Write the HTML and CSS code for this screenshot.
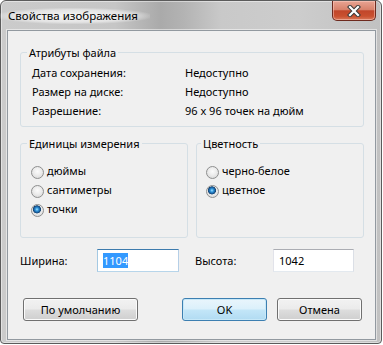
FILE: index.html
```html
<!DOCTYPE html>
<html lang="ru">
<head>
    <meta charset="UTF-8">
    <meta name="viewport" content="width=device-width, initial-scale=1.0">
    <title>Свойства изображения</title>
    <link rel="stylesheet" href="styles.css">
</head>
<body>
    <div class="window">
        <div class="title-bar">
            <span class="title">Свойства изображения</span>
            <button class="close-button" aria-label="Закрыть">
                <svg width="14" height="12" viewBox="0 0 14 12">
                    <path d="M3 2 L11 10 M11 2 L3 10" stroke="#3a3a3a" stroke-width="4.2" stroke-linecap="square"/>
                    <path d="M3 2 L11 10 M11 2 L3 10" stroke="#ffffff" stroke-width="2.2" stroke-linecap="square"/>
                </svg>
            </button>
        </div>

        <div class="client">
            <fieldset class="group group-file">
                <legend>Атрибуты файла</legend>
                <div class="attr-list">
                    <span>Дата сохранения:</span><span>Недоступно</span>
                    <span>Размер на диске:</span><span>Недоступно</span>
                    <span>Разрешение:</span><span>96 x 96 точек на дюйм</span>
                </div>
            </fieldset>

            <div class="group-row">
                <fieldset class="group">
                    <legend>Единицы измерения</legend>
                    <div class="radio-list">
                        <label class="radio"><input type="radio" name="units">дюймы</label>
                        <label class="radio"><input type="radio" name="units">сантиметры</label>
                        <label class="radio"><input type="radio" name="units" checked>точки</label>
                    </div>
                </fieldset>
                <fieldset class="group group-color">
                    <legend>Цветность</legend>
                    <div class="radio-list">
                        <label class="radio"><input type="radio" name="color">черно-белое</label>
                        <label class="radio"><input type="radio" name="color" checked>цветное</label>
                    </div>
                </fieldset>
            </div>

            <div class="size-row">
                <span class="size-label">Ширина:</span>
                <div class="textbox focused"><span class="selected">1104</span></div>
                <span class="size-label size-label-height">Высота:</span>
                <div class="textbox textbox-height">1042</div>
            </div>

            <div class="buttons">
                <button class="button button-reset">По умолчанию</button>
                <button class="button button-default">OK</button>
                <button class="button">Отмена</button>
            </div>
        </div>
    </div>
</body>
</html>
```

FILE: styles.css
```css
body {
    margin: 0;
    background-color: #fff;
    font-family: "Noto Sans", sans-serif;
    font-size: 11px;
    color: #000;
}

.window {
    width: 382px;
    height: 344px;
    box-sizing: border-box;
    display: flex;
    flex-direction: column;
    padding: 0 5px 3px 6px;
    border: 1px solid #5b5b5b;
    border-radius: 6px 6px 4px 4px;
    background: linear-gradient(90deg, #cbcbcb 0%, #c6c6c6 30%, #aaaaaa 42%, #b3b3b3 48%, #c9c9c9 58%, #cdcdcd 78%, #c1c1c1 100%);
    box-shadow: inset 0 0 0 1px rgba(255, 255, 255, 0.45);
}

/* title bar */

.title-bar {
    height: 29px;
    display: flex;
    justify-content: space-between;
    align-items: flex-start;
}

.title {
    margin-top: 7px;
    margin-left: -9px;
    padding: 0 12px 0 10px;
    font-size: 11.5px;
    line-height: 16px;
    color: #000;
    background: radial-gradient(ellipse at center, rgba(255, 255, 255, 0.85) 0%, rgba(255, 255, 255, 0.5) 55%, rgba(255, 255, 255, 0) 75%);
}

.close-button {
    width: 44px;
    height: 20px;
    margin: 0;
    padding: 0;
    display: flex;
    justify-content: center;
    align-items: center;
    border: 1px solid #6d2a1e;
    border-top: none;
    border-radius: 0 0 5px 5px;
    background: linear-gradient(#e8a493 0%, #d8826c 45%, #c1462a 52%, #c9502f 80%, #d9785a 100%);
    box-shadow: inset 0 0 0 1px rgba(255, 210, 200, 0.5);
}

/* client area */

.client {
    flex: 1;
    display: flex;
    flex-direction: column;
    padding: 14px 0 0 12px;
    border: 1px solid #9299a0;
    background-color: #f0f0f0;
    box-shadow: 0 0 0 1px rgba(255, 255, 255, 0.5);
}

.group {
    margin: 0;
    padding: 0;
    min-width: 0;
    box-sizing: border-box;
    border: 1px solid #d5dfe5;
    border-radius: 3px;
}

.group legend {
    margin-left: 6px;
    padding: 0 2px;
    line-height: 15px;
}

.group-file {
    width: 344px;
}

.attr-list {
    display: grid;
    grid-template-columns: 153px auto;
    padding: 3px 0 6px 11px;
    line-height: 19px;
}

.group-row {
    display: flex;
    gap: 8px;
    margin-top: 9px;
    width: 344px;
}

.group-row .group {
    flex: 1;
}

.group-color legend {
    margin-left: 4px;
}

.radio-list {
    display: flex;
    flex-direction: column;
    padding: 10px 0 19px 10px;
}

.group-color .radio-list {
    padding-left: 9px;
}

.radio {
    display: flex;
    align-items: flex-start;
    line-height: 19px;
}

.radio input {
    appearance: none;
    width: 13px;
    height: 13px;
    margin: 5px 3px 0 0;
    box-sizing: border-box;
    border: 1px solid #8e8f8f;
    border-radius: 50%;
    background: radial-gradient(circle at 50% 40%, #fbfbfb 0%, #ececec 45%, #d3d3d3 100%);
}

.radio input:checked {
    background: radial-gradient(circle at 45% 40%, #a6e2ff 0%, #2f96dc 1.6px, #1a5f9e 3px, #16436f 3.8px, rgba(22, 67, 111, 0) 4.3px),
                radial-gradient(circle at 50% 40%, #fbfbfb 0%, #ececec 45%, #d3d3d3 100%);
}

/* width / height */

.size-row {
    display: flex;
    align-items: center;
    margin-top: 11px;
}

.size-label {
    width: 77px;
}

.size-label-height {
    width: 78px;
    margin-left: 16px;
}

.textbox {
    width: 82px;
    height: 23px;
    box-sizing: border-box;
    display: flex;
    align-items: center;
    padding-left: 5px;
    border: 1px solid;
    border-color: #abadb3 #dbdfe6 #e3e9ef #e2e3ea;
    background-color: #fff;
}

.textbox.focused {
    border-color: #3d7bad #b5cfe7 #b7d5ea #a4c9e3;
}

.textbox-height {
    width: 81px;
}

.selected {
    background-color: #3399ff;
    color: #fff;
    line-height: 15px;
}

/* buttons */

.buttons {
    display: flex;
    margin-top: 26px;
    padding-left: 3px;
}

.button {
    width: 85px;
    height: 23px;
    margin: 0 0 0 10px;
    padding: 0;
    font-family: inherit;
    font-size: 11px;
    color: #000;
    border: 1px solid #707070;
    border-radius: 3px;
    background: linear-gradient(#f2f2f2 0%, #ebebeb 48%, #dddddd 52%, #cfcfcf 100%);
    box-shadow: inset 0 0 0 1px #fbfbfb;
}

.button-reset {
    width: 115px;
    margin-left: 0;
}

.button-default {
    margin-left: 44px;
    border-color: #3c7fb1;
    background: linear-gradient(#e9f5fc 0%, #dbf0fb 48%, #c3e6f8 52%, #b1dbf2 100%);
    box-shadow: inset 0 0 0 1px #c7e8f8;
}
```
